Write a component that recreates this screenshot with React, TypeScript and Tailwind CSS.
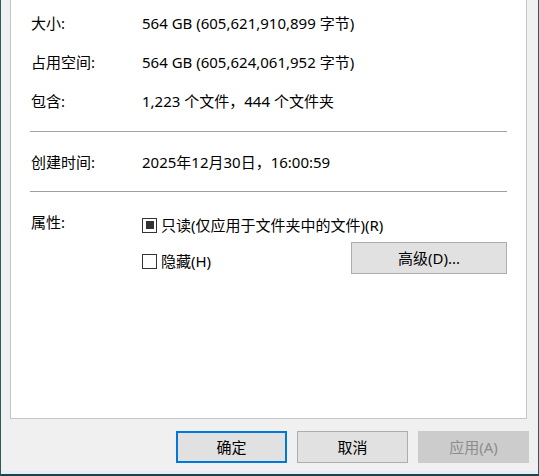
import React from "react";

const font = { fontFamily: '"Noto Sans", "Noto Sans CJK SC", sans-serif' };

function InfoRow({ label, value, h }: { label: string; value: string; h: string }) {
  return (
    <div className={`flex items-center ${h}`}>
      <div className="w-[112px] pl-[1px]">{label}</div>
      <div>{value}</div>
    </div>
  );
}

function Checkbox({ checked }: { checked?: boolean }) {
  return (
    <span className="flex h-[15px] w-[15px] items-center justify-center border border-[#333333] bg-white">
      {checked && <span className="h-[8px] w-[8px] bg-[#333333]" />}
    </span>
  );
}

export default function App() {
  return (
    <div
      style={font}
      className="flex h-[476px] w-[539px] flex-col overflow-hidden border-x border-b-2 border-x-[#2b5a58] border-b-[#22404a] bg-[#f0f0f0] text-[15px] leading-[20px] text-[#000000]"
    >
      <div className="flex h-[419px] flex-col pl-[9px] pr-[11px]">
        <div className="flex flex-1 flex-col border-x border-b border-[#c6c6c6] bg-white pl-[19px] pr-[19px] pt-[3px]">
          <InfoRow label="大小:" value="564 GB (605,621,910,899 字节)" h="h-[39px]" />
          <InfoRow label="占用空间:" value="564 GB (605,624,061,952 字节)" h="h-[39px]" />
          <InfoRow label="包含:" value="1,223 个文件，444 个文件夹" h="h-[39px]" />
          <div className="mt-[11px] h-px bg-[#a0a0a0]" />
          <InfoRow label="创建时间:" value="2025年12月30日，16:00:59" h="h-[59px]" />
          <div className="h-px bg-[#a0a0a0]" />
          <div className="flex">
            <div className="mt-[20px] w-[112px] self-start pl-[1px]">属性:</div>
            <div className="flex flex-1 flex-col">
              <div className="mt-[22px] flex h-[22px] items-center gap-[4px]">
                <Checkbox checked />
                <span>只读(仅应用于文件夹中的文件)(R)</span>
              </div>
              <div className="mt-[6px] flex h-[32px] items-center justify-between">
                <div className="flex items-center gap-[4px] pt-[6px]">
                  <Checkbox />
                  <span>隐藏(H)</span>
                </div>
                <button className="h-[32px] w-[156px] border border-[#adadad] bg-[#e1e1e1]">
                  高级(D)...
                </button>
              </div>
            </div>
          </div>
        </div>
      </div>
      <div className="mt-[12px] flex justify-end gap-[10px] pr-[9px]">
        <button className="h-[32px] w-[111px] border-2 border-[#0078d7] bg-[#e1e1e1]">确定</button>
        <button className="h-[32px] w-[111px] border border-[#adadad] bg-[#e1e1e1]">取消</button>
        <button className="h-[32px] w-[111px] border border-[#cccccc] bg-[#cccccc] text-[#8c8c8c]">
          应用(A)
        </button>
      </div>
      <div className="mt-auto h-[3px] bg-[#e3f1f6]" />
    </div>
  );
}
